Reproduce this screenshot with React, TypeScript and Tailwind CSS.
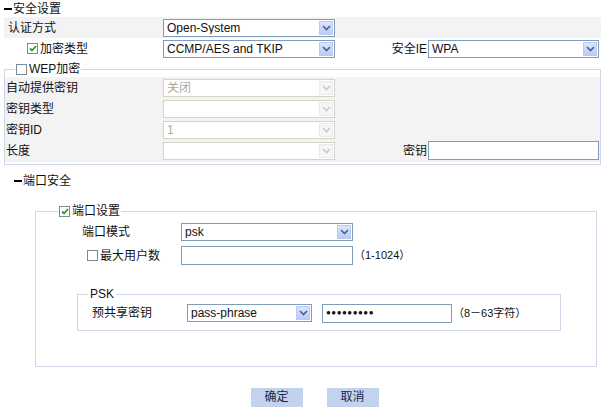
import type { ReactNode } from "react";

const font = "font-['Liberation_Sans','Noto_Sans_CJK_SC',sans-serif]";

function Chevron({ muted }: { muted?: boolean }) {
  return (
    <svg width="9" height="6" viewBox="0 0 9 6" aria-hidden>
      <path
        d="M1 1 L4.5 4.5 L8 1"
        fill="none"
        stroke={muted ? "#c9c9c9" : "#4a5f8c"}
        strokeWidth="1.6"
      />
    </svg>
  );
}

function Select({
  value,
  width,
  disabled,
}: {
  value?: string;
  width: string;
  disabled?: boolean;
}) {
  return (
    <div
      className={`${width} flex h-[18px] shrink-0 items-center border bg-white ${
        disabled ? "border-[#d6d4c8] text-[#aca899]" : "border-[#7f9db9] text-[#111]"
      }`}
    >
      <span className="flex-1 truncate pl-[3px] leading-none">{value}</span>
      <span
        className={`m-px flex h-[14px] w-[14px] items-center justify-center border ${
          disabled
            ? "border-[#eaeaea] bg-[#f6f6f6]"
            : "border-[#b9cbf5] bg-gradient-to-b from-[#dbe6fc] to-[#b8cbf6]"
        }`}
      >
        <Chevron muted={disabled} />
      </span>
    </div>
  );
}

function Input({ width, children }: { width: string; children?: ReactNode }) {
  return (
    <div
      className={`${width} flex h-[19px] shrink-0 items-center border border-[#7f9db9] bg-white pl-[3px]`}
    >
      {children}
    </div>
  );
}

function Check({ checked }: { checked?: boolean }) {
  return (
    <span className="mr-[2px] inline-flex h-[11px] w-[11px] shrink-0 items-center justify-center border border-[#7a8a99] bg-white">
      {checked && (
        <svg width="8" height="7" viewBox="0 0 8 7" aria-hidden>
          <path d="M1 3.5 L3 5.5 L7 1" fill="none" stroke="#21a121" strokeWidth="1.8" />
        </svg>
      )}
    </span>
  );
}

function Heading({ children, indent }: { children: ReactNode; indent: string }) {
  return (
    <div className={`flex h-[17px] items-center ${indent}`}>
      <span className="mr-px inline-block h-[2px] w-[8px] bg-black" />
      {children}
    </div>
  );
}

const wepRows = [
  { label: "自动提供密钥", value: "关闭" },
  { label: "密钥类型", value: "" },
  { label: "密钥ID", value: "1" },
];

export default function App() {
  return (
    <div className={`${font} h-[408px] w-[601px] overflow-hidden bg-white text-[12px] text-[#111]`}>
      <Heading indent="pl-[4px]">安全设置</Heading>

      {/* 认证方式 */}
      <div className="ml-[4px] flex h-[21px] items-center bg-[#f3f3f3]">
        <span className="w-[159px] pl-[4px]">认证方式</span>
        <Select value="Open-System" width="w-[172px]" />
      </div>

      {/* 加密类型 / 安全IE */}
      <div className="ml-[4px] flex h-[21px] items-center">
        <span className="flex w-[159px] items-center pl-[23px]">
          <Check checked />
          加密类型
        </span>
        <Select value="CCMP/AES and TKIP" width="w-[172px]" />
        <span className="w-[93px] pr-[1px] text-right">安全IE</span>
        <Select value="WPA" width="w-[171px]" />
      </div>

      {/* WEP加密 */}
      <fieldset className="mx-[4px] mt-[3px] w-[597px] border border-[#ccd6e6] pb-[2px]">
        <legend className="ml-[10px] flex h-[14px] items-center px-[1px]">
          <Check />
          WEP加密
        </legend>
        <div className="mt-[1px] bg-[#f3f3f3] pb-px">
          {wepRows.map((r) => (
            <div key={r.label} className="flex h-[21px] items-center">
              <span className="w-[158px] pl-px">{r.label}</span>
              <Select value={r.value} width="w-[172px]" disabled />
            </div>
          ))}
          <div className="flex h-[21px] items-center">
            <span className="w-[158px] pl-px">长度</span>
            <Select width="w-[172px]" disabled />
            <span className="w-[93px] pr-[1px] text-right">密钥</span>
            <Input width="w-[171px]" />
          </div>
        </div>
      </fieldset>

      <div className="mt-[7px]">
        <Heading indent="pl-[14px]">端口安全</Heading>
      </div>

      {/* 端口设置 */}
      <fieldset className="ml-[35px] mt-[15px] h-[163px] w-[562px] border border-[#ccd6e6]">
        <legend className="ml-[22px] flex h-[14px] items-center px-px">
          <Check checked />
          端口设置
        </legend>

        <div className="mt-[4px] flex h-[20px] items-center">
          <span className="w-[145px] pl-[46px]">端口模式</span>
          <Select value="psk" width="w-[172px]" />
        </div>
        <div className="mt-[3px] flex h-[21px] items-center">
          <span className="flex w-[145px] items-center pl-[51px]">
            <Check />
            最大用户数
          </span>
          <Input width="w-[172px]" />
          <span className="ml-px text-[11px]">（1-1024）</span>
        </div>

        {/* PSK */}
        <fieldset className="ml-[41px] mt-[21px] h-[44px] w-[484px] border border-[#ccd6e6]">
          <legend className="ml-[10px] h-[14px] px-[2px] leading-[14px]">PSK</legend>
          <div className="mt-[2px] flex h-[20px] items-center">
            <span className="w-[109px] pl-[14px]">预共享密钥</span>
            <Select value="pass-phrase" width="w-[125px]" />
            <span className="w-[10px]" />
            <Input width="w-[130px]">
              <span className="text-[8px] tracking-[0.5px]">●●●●●●●●●</span>
            </Input>
            <span className="ml-px text-[11px]">（8－63字符）</span>
          </div>
        </fieldset>
      </fieldset>

      <div className="mt-[21px] flex justify-center gap-[24px] pl-[28px]">
        <button className="h-[19px] w-[52px] bg-[#c3d3ee] text-[12px] leading-[19px] text-[#1a2744]">
          确定
        </button>
        <button className="h-[19px] w-[52px] bg-[#c3d3ee] text-[12px] leading-[19px] text-[#1a2744]">
          取消
        </button>
      </div>
    </div>
  );
}
